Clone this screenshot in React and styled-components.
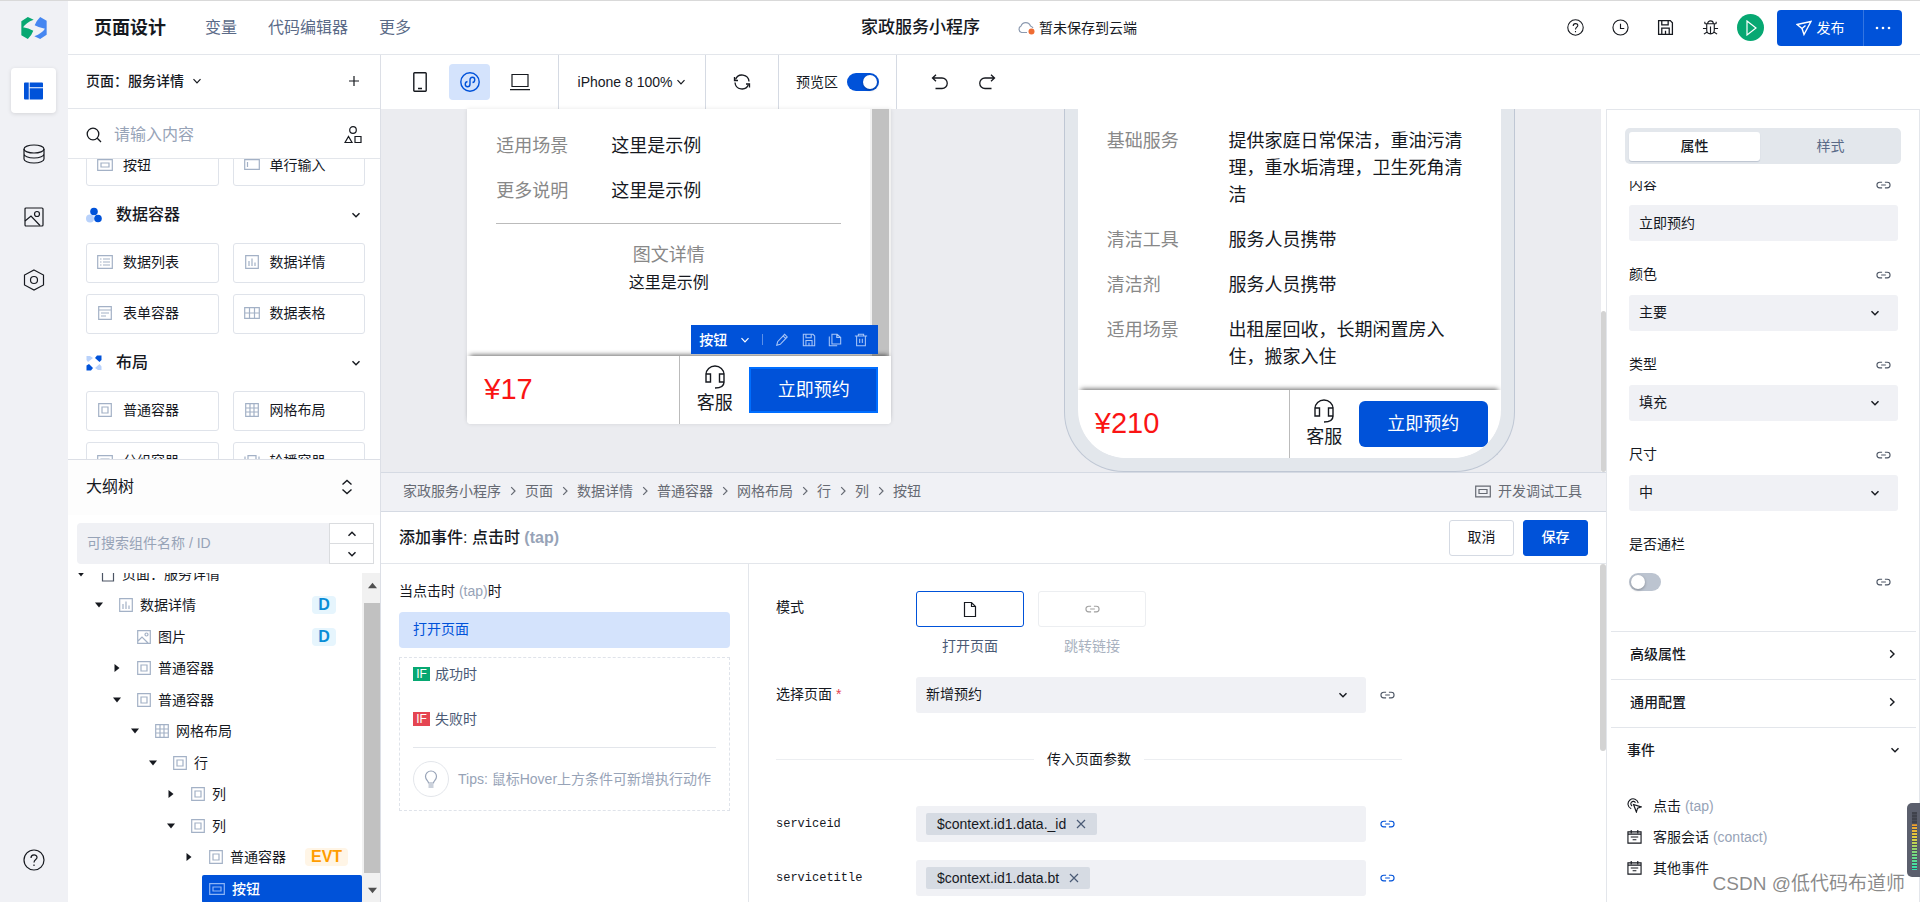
import React, { useLayoutEffect, useRef, useState } from "react";
import styled, { createGlobalStyle, css } from "styled-components";

const BLUE = "#0052d9";
const LINE = "#e3e6eb";
const MUTED = "#97a3b7";

/* ---------- icons ---------- */

const shapes = {
    logo: {
        box: "0 0 76 64",
        body: (
            <>
                <path fill="#07a872" d="M1 12 20 0 37 8Q14 17 6 30 22 32 36 40 32 52 20 64L1 53Z" />
                <path fill="#4687f1" d="M75 52 56 64 39 56Q62 47 70 34 54 32 40 24 44 12 56 0L75 11Z" />
            </>
        ),
    },
    board: {
        box: "0 0 20 18",
        body: (
            <g fill={BLUE} stroke="none">
                <path d="M1 0h4v18H1a1 1 0 0 1-1-1V1a1 1 0 0 1 1-1zM6 0h13a1 1 0 0 1 1 1v4H6zM6 6h14v11a1 1 0 0 1-1 1H6z" />
            </g>
        ),
    },
    database: {
        box: "0 0 22 20",
        body: (
            <>
                <ellipse cx="11" cy="5" rx="10" ry="4" />
                <path d="M1 5v10c0 2 4 4 10 4s10-2 10-4V5M1 10c0 2 4 4 10 4s10-2 10-4" />
            </>
        ),
    },
    image: {
        box: "0 0 20 20",
        body: (
            <>
                <rect x="1" y="1" width="18" height="18" rx="1" />
                <circle cx="13" cy="7" r="2.5" />
                <path d="m1 14 6-5 9 9.500" />
            </>
        ),
    },
    hexagon: {
        box: "0 0 22 22",
        body: (
            <>
                <path d="m11 1 9.500 5v10L11 21l-9.500-5V6z" />
                <circle cx="11" cy="11" r="3.500" />
            </>
        ),
    },
    help: {
        box: "0 0 22 22",
        body: (
            <>
                <circle cx="11" cy="11" r="10" />
                <path d="M8 9c0-4 6-4 6-.5 0 2-3 2.200-3 5M11 15.500v1.500" />
            </>
        ),
    },
    clock: {
        box: "0 0 18 18",
        body: (
            <>
                <circle cx="9" cy="9" r="8" />
                <path d="M9 5v5h4" />
            </>
        ),
    },
    save: {
        box: "0 0 16 16",
        body: <path d="M1.500 1.500h11l2 2v11h-13zM4.500 1.500v4h6v-4M4.500 14.500v-6h7v6M8 11v3" />,
    },
    bug: {
        box: "0 0 18 18",
        body: <path d="M6 5a3 3 0 0 1 6 0M3 5h12M5 5v7c0 5 8 5 8 0V5M9 8v8M1 10h4M13 10h4M2 16l3-2M16 16l-3-2M3 5V3M15 5V3" />,
    },
    play: { box: "0 0 16 16", body: <path d="m4 1 9 7-9 7z" /> },
    send: { box: "0 0 16 16", body: <path d="M1 4.500 15 1.500 8 14.500 6 8.500zM6 8.500l3.500-3" /> },
    dots: {
        box: "0 0 16 16",
        body: (
            <g fill="currentColor" stroke="none">
                <circle cx="2" cy="8" r="1.300" />
                <circle cx="8" cy="8" r="1.300" />
                <circle cx="14" cy="8" r="1.300" />
            </g>
        ),
    },
    cloud: {
        box: "0 0 18 14",
        body: (
            <>
                <path stroke="#8c9ab0" d="M10 11.500H4.500a3.500 3.500 0 0 1-.5-6.500 5 5 0 0 1 9.500 0c1 .3 2 1 2.500 2" />
                <circle cx="14.500" cy="10.500" r="3" fill="#ef6c33" stroke="none" />
            </>
        ),
    },
    chevron: { box: "0 0 10 10", body: <path d="m1.500 3.200 3.500 3.600 3.500-3.600" /> },
    chevronUp: { box: "0 0 10 10", body: <path d="m1.500 6.800 3.500-3.600 3.500 3.600" /> },
    chevronRight: { box: "0 0 10 10", body: <path d="m3.200 1.200 3.800 3.800-3.800 3.800" /> },
    unfold: { box: "0 0 12 16", body: <path d="m1.500 5.500 4.500-4 4.500 4M1.500 10.500l4.500 4 4.500-4" /> },
    plus: { box: "0 0 12 12", body: <path d="M6 1v10M1 6h10" /> },
    close: { box: "0 0 10 10", body: <path d="m1 1 8 8M9 1 1 9" /> },
    search: {
        box: "0 0 16 16",
        body: (
            <>
                <circle cx="7" cy="7" r="5.800" />
                <path d="m11.300 11.300 3.700 3.700" />
            </>
        ),
    },
    kinds: {
        box: "0 0 18 18",
        body: (
            <>
                <circle cx="9" cy="4" r="3.300" />
                <path d="m1 16.500 3.500-6 3.500 6zM11 10.500h6v6h-6z" />
            </>
        ),
    },
    phone: {
        box: "0 0 14 20",
        body: <path d="M1.500.8h11a.7.7 0 0 1 .7.7v17a.7.7 0 0 1-.7.7h-11a.7.7 0 0 1-.7-.7v-17a.7.7 0 0 1 .7-.7zM5 16.500h4" />,
    },
    mini: {
        box: "0 0 20 20",
        body: (
            <>
                <circle cx="10" cy="10" r="9.200" />
                <path d="M7.500 9.500C4.500 10 4.500 14.800 7.500 14.800c1.600 0 2.500-1 2.500-2.800V8c0-1.800.9-2.800 2.500-2.800 3 0 3 4.800 0 5.300" />
            </>
        ),
    },
    laptop: { box: "0 0 20 18", body: <path d="M2 1.500h16v12H2zM0 16.700h20" /> },
    refresh: {
        box: "0 0 18 18",
        body: (
            <>
                <path d="M2.500 6.500A7 7 0 0 1 16 8.500M15.500 11.500A7 7 0 0 1 2 9.500" />
                <path d="M1.500 4v3.500H5M16.500 14.500V11H13" />
            </>
        ),
    },
    undo: { box: "0 0 18 16", body: <path d="M5 .8 1.500 4 5 7.200M1.500 4H11a5 5 0 0 1 0 10.500H4.500" /> },
    redo: { box: "0 0 18 16", body: <path d="m13 .8 3.500 3.200L13 7.200M16.500 4H7a5 5 0 0 0 0 10.500h6.500" /> },
    link: {
        box: "0 0 16 10",
        body: <path d="M6.500 2H4a3 3 0 0 0 0 6h2.500M9.500 2H12a3 3 0 0 1 0 6H9.500M5.500 5h5" />,
    },
    file: { box: "0 0 14 16", body: <path d="M1.500 1h7l4 4v10h-11zM8.500 1v4h4" /> },
    button: { box: "0 0 16 12", body: <path d="M.7.7h14.600v10.600H.7zM4 4h8v4H4z" /> },
    input: { box: "0 0 16 12", body: <path d="M.7.7h14.600v9.600H.7zM3.500 3v5" /> },
    list: { box: "0 0 16 14", body: <path d="M.7.7h14.600v12.600H.7zM3 4h1.500M3 7h1.500M3 10h1.500M6 4h7M6 7h7M6 10h7" /> },
    chart: { box: "0 0 14 14", body: <path d="M.7.7h12.600v12.600H.7zM4 6v5M7 3.500V11M10 7.500V11" /> },
    form: { box: "0 0 14 14", body: <path d="M.7.7h12.600v12.600H.7zM.7 4h12.600M3 7h8M3 10h5" /> },
    table: { box: "0 0 16 12", body: <path d="M.7.7h14.600v10.600H.7zM.7 6h14.600M5.500.7v10.600M10.500.7v10.600" /> },
    box: { box: "0 0 14 14", body: <path d="M.7.7h12.600v12.600H.7zM4 4h6v6H4z" /> },
    grid: { box: "0 0 14 14", body: <path d="M.7.7h12.600v12.600H.7zM.7 5h12.600M.7 9h12.600M5 .7v12.600M9 .7v12.600" /> },
    carousel: { box: "0 0 16 12", body: <path d="M4 .7h8v10.600H4zM1 1.500v9M15 1.500v9" /> },
    picture: {
        box: "0 0 14 14",
        body: (
            <>
                <path d="M.7.7h12.600v12.600H.7zM1 11l4-4 6 6" />
                <circle cx="9.500" cy="4.500" r="1.500" />
            </>
        ),
    },
    circles: {
        box: "0 0 16 16",
        body: (
            <g stroke="none">
                <circle cx="4" cy="11.500" r="4" fill="#b9d2fb" />
                <circle cx="8" cy="4.500" r="3.800" fill={BLUE} />
                <circle cx="12" cy="11.500" r="3.800" fill={BLUE} />
            </g>
        ),
    },
    fans: {
        box: "0 0 16 16",
        body: (
            <g stroke="none">
                <path fill="#b9d2fb" d="M.5 1h3.500l3 2L2 7 .5 5zM15.500 15H12l-3-2 4.500-4 2 2.500z" />
                <path fill={BLUE} d="M15.500.5H11L9 3l4.500 4 2-2zM.5 15.500H5L7 13 3 9 .5 10.500z" />
            </g>
        ),
    },
    headset: {
        box: "0 0 20 24",
        body: <path d="M1 9.500a9 8.500 0 0 1 18 0M1 9h4.500v8H1zM14.500 9H19v8h-4.500zM19 17c0 4-3.500 6-9 6" />,
    },
    pencil: { box: "0 0 16 16", body: <path d="m2 14 1-4 8-8.500 3 3L6 13zM9.500 3.500l3 3" /> },
    copy: { box: "0 0 16 16", body: <path d="M4.500 1.500h6l4 3.500v7.500h-10zM10 1.500V5h4M1.500 4v10.500h9" /> },
    trash: { box: "0 0 16 16", body: <path d="M1 3.500h14M5 3.500v-2h6v2M3 3.500v11h10v-11M6.500 6.500v5M9.500 6.500v5" /> },
    bulb: {
        box: "0 0 14 18",
        body: <path d="M4.500 13c0-2-3-3-3-6.500a5.500 5.500 0 0 1 11 0c0 3.500-3 4.500-3 6.500zM4.500 15h5M4.500 17h5" />,
    },
    tap: {
        box: "0 0 16 16",
        body: <path d="M4.500 11.500A5.500 5.500 0 1 1 12 5.500M5.500 8.500A2.600 2.600 0 1 1 9 5M7 7l8 2.500-3.700 1.300L10 15z" />,
    },
    calendar: { box: "0 0 16 16", body: <path d="M1 3h14v12H1zM4.500 1v3.500M11.500 1v3.500M4 8.500h8M6 11.500h4M1 5.500h14" /> },
    caret: { box: "0 0 8 8", body: <path fill="currentColor" stroke="none" d="M0 1.500h8l-4 5z" /> },
    caretRight: { box: "0 0 8 8", body: <path fill="currentColor" stroke="none" d="M1.500 0v8l5-4z" /> },
    caretUp: { box: "0 0 8 8", body: <path fill="currentColor" stroke="none" d="M0 6.500h8l-4-5z" /> },
};

const Svg = styled.svg`
    display: block;
    flex: none;
    fill: none;
    stroke: currentColor;
    stroke-width: ${(p) => p.$weight};
    color: ${(p) => p.$color};
`;

const Icon = ({ name, w = 16, h = w, color = "inherit", weight = 1.2 }) => (
    <Svg viewBox={shapes[name].box} width={w} height={h} $color={color} $weight={weight} aria-hidden="true">
        {name === "logo" ? <g stroke="none">{shapes[name].body}</g> : shapes[name].body}
    </Svg>
);

/* ---------- data ---------- */

const railItems = [
    { name: "database", label: "数据源", w: 22, h: 20 },
    { name: "image", label: "素材", w: 20, h: 20 },
    { name: "hexagon", label: "设置", w: 22, h: 22 },
];

const palette = [
    { items: [["button", "按钮"], ["input", "单行输入"]] },
    {
        title: "数据容器",
        icon: "circles",
        items: [["list", "数据列表"], ["chart", "数据详情"], ["form", "表单容器"], ["table", "数据表格"]],
    },
    {
        title: "布局",
        icon: "fans",
        items: [["box", "普通容器"], ["grid", "网格布局"], ["button", "分组容器"], ["carousel", "轮播容器"]],
    },
];

const tree = [
    { level: 0, icon: "file", label: "页面：服务详情", open: true },
    { level: 1, icon: "chart", label: "数据详情", open: true, badge: "D" },
    { level: 2, icon: "picture", label: "图片", badge: "D" },
    { level: 2, icon: "box", label: "普通容器", open: false },
    { level: 2, icon: "box", label: "普通容器", open: true },
    { level: 3, icon: "grid", label: "网格布局", open: true },
    { level: 4, icon: "box", label: "行", open: true },
    { level: 5, icon: "box", label: "列", open: false },
    { level: 5, icon: "box", label: "列", open: true },
    { level: 6, icon: "box", label: "普通容器", open: false, badge: "EVT" },
    { level: 6, icon: "button", label: "按钮", selected: true },
];

const crumbs = ["家政服务小程序", "页面", "数据详情", "普通容器", "网格布局", "行", "列", "按钮"];

const previewRows = [
    ["基础服务", "提供家庭日常保洁，重油污清理，重水垢清理，卫生死角清洁"],
    ["清洁工具", "服务人员携带"],
    ["清洁剂", "服务人员携带"],
    ["适用场景", "出租屋回收，长期闲置房入住，搬家入住"],
];

const selects = [
    ["颜色", "主要"],
    ["类型", "填充"],
    ["尺寸", "中"],
];

const events = [
    ["tap", "点击", "(tap)"],
    ["calendar", "客服会话", "(contact)"],
    ["calendar", "其他事件", ""],
];

/* ---------- shared parts ---------- */

const ScrollPane = ({ as: Pane, start = 0, children }) => {
    const ref = useRef(null);
    useLayoutEffect(() => {
        ref.current.scrollTop = start;
    }, [start]);
    return <Pane ref={ref}>{children}</Pane>;
};

const SelectField = ({ id, value }) => (
    <SelectWrap>
        <select id={id} defaultValue={value}>
            <option>{value}</option>
        </select>
        <Icon name="chevron" w={10} weight={1.4} />
    </SelectWrap>
);

const PhoneFooter = ({ price, selected }) => (
    <Footer>
        <Price>{price}</Price>
        <Service>
            <Icon name="headset" w={20} h={24} weight={1.4} />
            客服
        </Service>
        <Book>
            <BookButton type="button" $selected={selected}>立即预约</BookButton>
            {selected && (
                <Floater>
                    <b>按钮</b>
                    <Icon name="chevron" w={10} />
                    <i />
                    <FloaterButton type="button" aria-label="编辑"><Icon name="pencil" w={14} /></FloaterButton>
                    <FloaterButton type="button" aria-label="保存"><Icon name="save" w={14} /></FloaterButton>
                    <FloaterButton type="button" aria-label="复制"><Icon name="copy" w={14} /></FloaterButton>
                    <FloaterButton type="button" aria-label="删除"><Icon name="trash" w={14} /></FloaterButton>
                </Floater>
            )}
        </Book>
    </Footer>
);

/* ---------- page ---------- */

const App = () => {
    const [preview, setPreview] = useState(true);
    const [full, setFull] = useState(false);

    return (
        <>
            <Global />
            <Page>
                <Rail>
                    <Icon name="logo" w={26} h={22} />
                    <RailNav>
                        <RailButton type="button" aria-label="页面" $active><Icon name="board" w={19} h={18} /></RailButton>
                        {railItems.map((item) => (
                            <RailButton type="button" key={item.name} aria-label={item.label}>
                                <Icon name={item.name} w={item.w} h={item.h} />
                            </RailButton>
                        ))}
                    </RailNav>
                    <RailButton type="button" aria-label="帮助"><Icon name="help" w={22} /></RailButton>
                </Rail>

                <Main>
                    <Header>
                        <HeaderNav>
                            <h1>页面设计</h1>
                            <a href="#vars">变量</a>
                            <a href="#code">代码编辑器</a>
                            <a href="#more">更多</a>
                        </HeaderNav>
                        <HeaderTitle>
                            <strong>家政服务小程序</strong>
                            <span><Icon name="cloud" w={18} h={14} />暂未保存到云端</span>
                        </HeaderTitle>
                        <HeaderTools>
                            <IconButton type="button" aria-label="帮助"><Icon name="help" w={17} weight={1.4} /></IconButton>
                            <IconButton type="button" aria-label="历史"><Icon name="clock" w={17} /></IconButton>
                            <IconButton type="button" aria-label="保存"><Icon name="save" w={17} /></IconButton>
                            <IconButton type="button" aria-label="调试"><Icon name="bug" w={17} /></IconButton>
                            <PlayButton type="button" aria-label="预览"><Icon name="play" w={16} /></PlayButton>
                            <Publish>
                                <button type="button"><Icon name="send" w={16} weight={1.4} />发布</button>
                                <button type="button" aria-label="更多操作"><Icon name="dots" w={16} /></button>
                            </Publish>
                        </HeaderTools>
                    </Header>

                    <Work>
                        <Side>
                            <SideHead>
                                <b>页面：服务详情</b>
                                <Icon name="chevron" w={10} />
                                <PlainButton type="button" aria-label="新建"><Icon name="plus" w={12} /></PlainButton>
                            </SideHead>
                            <SideSearch>
                                <Icon name="search" w={16} weight={1.3} />
                                <input aria-label="搜索组件" placeholder="请输入内容" />
                                <Icon name="kinds" w={18} />
                            </SideSearch>
                            <ScrollPane as={Palette} start={13}>
                                {palette.map((group) => (
                                    <section key={group.items[0][1]}>
                                        {group.title && (
                                            <GroupTitle>
                                                <Icon name={group.icon} w={16} />
                                                <h2>{group.title}</h2>
                                                <Icon name="chevron" w={10} weight={1.4} />
                                            </GroupTitle>
                                        )}
                                        <Cards>
                                            {group.items.map(([icon, label]) => (
                                                <Card type="button" key={label}>
                                                    <IconSlot><TreeIcon name={icon} /></IconSlot>
                                                    {label}
                                                </Card>
                                            ))}
                                        </Cards>
                                    </section>
                                ))}
                            </ScrollPane>
                            <OutlineHead>
                                大纲树
                                <Icon name="unfold" w={12} h={16} weight={1.4} />
                            </OutlineHead>
                            <OutlineSearch>
                                <input aria-label="搜索大纲" placeholder="可搜索组件名称 / ID" />
                                <div>
                                    <button type="button" aria-label="上一个"><Icon name="chevronUp" w={10} weight={1.4} /></button>
                                    <button type="button" aria-label="下一个"><Icon name="chevron" w={10} weight={1.4} /></button>
                                </div>
                            </OutlineSearch>
                            <Outline>
                                <ScrollPane as={TreeList} start={15}>
                                    {tree.map((node, i) => (
                                        <TreeRow key={i} $level={node.level}>
                                            <CaretSlot>
                                                {node.open !== undefined && (
                                                    <Icon name={node.open ? "caret" : "caretRight"} w={8} />
                                                )}
                                            </CaretSlot>
                                            <TreeLabel $selected={node.selected}>
                                                <TreeIcon
                                                    name={node.icon}
                                                    color={node.selected ? "#8db4f5" : node.level === 0 ? "#4c5564" : undefined}
                                                />
                                                {node.label}
                                            </TreeLabel>
                                            {node.badge && (
                                                <BadgeSlot><Badge $event={node.badge === "EVT"}>{node.badge}</Badge></BadgeSlot>
                                            )}
                                        </TreeRow>
                                    ))}
                                </ScrollPane>
                                <TreeScroll>
                                    <Icon name="caretUp" w={9} color="#505050" />
                                    <span />
                                    <Icon name="caret" w={9} color="#505050" />
                                </TreeScroll>
                            </Outline>
                        </Side>

                        <Stage>
                            <Toolbar>
                                <ToolGroup>
                                    <DeviceButton type="button" aria-label="手机"><Icon name="phone" w={14} h={20} weight={1.4} /></DeviceButton>
                                    <DeviceButton type="button" aria-label="小程序" $active><Icon name="mini" w={20} weight={1.4} /></DeviceButton>
                                    <DeviceButton type="button" aria-label="电脑"><Icon name="laptop" w={20} h={18} /></DeviceButton>
                                </ToolGroup>
                                <ToolGroup $size={147}>
                                    <PlainButton type="button">iPhone 8 100%<Icon name="chevron" w={10} /></PlainButton>
                                </ToolGroup>
                                <ToolGroup $size={73}>
                                    <PlainButton type="button" aria-label="刷新"><Icon name="refresh" w={18} weight={1.3} /></PlainButton>
                                </ToolGroup>
                                <ToolGroup $size={118}>
                                    <label htmlFor="preview">预览区</label>
                                    <Switch id="preview" type="checkbox" checked={preview} onChange={(e) => setPreview(e.target.checked)} />
                                </ToolGroup>
                                <History>
                                    <PlainButton type="button" aria-label="撤销"><Icon name="undo" w={18} h={16} weight={1.3} /></PlainButton>
                                    <PlainButton type="button" aria-label="重做"><Icon name="redo" w={18} h={16} weight={1.3} /></PlainButton>
                                </History>
                            </Toolbar>

                            <Content>
                                <Center>
                                    <Canvas>
                                        <Designs>
                                            <EditPhone>
                                                <EditScreen>
                                                    <PhoneBody $top={24}>
                                                        <dl>
                                                            <dt>适用场景</dt><dd>这里是示例</dd>
                                                            <dt>更多说明</dt><dd>这里是示例</dd>
                                                        </dl>
                                                        <hr />
                                                        <Rich>
                                                            <h3>图文详情</h3>
                                                            <p>这里是示例</p>
                                                        </Rich>
                                                    </PhoneBody>
                                                    <PhoneScroll />
                                                </EditScreen>
                                                <PhoneFooter price="¥17" selected />
                                            </EditPhone>
                                            <PreviewPhone>
                                                <PreviewScreen>
                                                    <PhoneBody $top={19}>
                                                        <dl>
                                                            {previewRows.map(([name, text]) => (
                                                                <React.Fragment key={name}><dt>{name}</dt><dd>{text}</dd></React.Fragment>
                                                            ))}
                                                        </dl>
                                                    </PhoneBody>
                                                    <PhoneFooter price="¥210" />
                                                </PreviewScreen>
                                            </PreviewPhone>
                                        </Designs>
                                        <CanvasScroll><span /></CanvasScroll>
                                    </Canvas>

                                    <Crumbs aria-label="组件路径">
                                        {crumbs.map((crumb, i) => (
                                            <React.Fragment key={crumb}>
                                                {i > 0 && <Icon name="chevronRight" w={10} />}
                                                <a href="#node">{crumb}</a>
                                            </React.Fragment>
                                        ))}
                                        <DevTools type="button"><Icon name="button" w={16} h={13} />开发调试工具</DevTools>
                                    </Crumbs>

                                    <EventHead>
                                        <h2>添加事件: 点击时 <Hint $bold>(tap)</Hint></h2>
                                        <ActionButton type="button">取消</ActionButton>
                                        <ActionButton type="button" $primary>保存</ActionButton>
                                    </EventHead>

                                    <EventBody>
                                        <Flow>
                                            <p>当点击时 <Hint>(tap)</Hint>时</p>
                                            <FlowAction type="button">打开页面</FlowAction>
                                            <FlowBranches>
                                                <Branch><Tag $color="#07a872">IF</Tag>成功时</Branch>
                                                <Branch><Tag $color="#e54552">IF</Tag>失败时</Branch>
                                                <Tips>
                                                    <span><Icon name="bulb" w={14} h={18} /></span>
                                                    Tips: 鼠标Hover上方条件可新增执行动作
                                                </Tips>
                                            </FlowBranches>
                                        </Flow>
                                        <Form>
                                            <ModeRow>
                                                <span>模式</span>
                                                <Mode type="button" $active><span><Icon name="file" w={14} h={17} /></span>打开页面</Mode>
                                                <Mode type="button"><span><Icon name="link" w={15} h={10} /></span>跳转链接</Mode>
                                            </ModeRow>
                                            <FormRow>
                                                <label htmlFor="page">选择页面 <em>*</em></label>
                                                <SelectField id="page" value="新增预约" />
                                                <Icon name="link" w={15} h={10} color="#4c5564" />
                                            </FormRow>
                                            <Divider>传入页面参数</Divider>
                                            {[["serviceid", "$context.id1.data._id"], ["servicetitle", "$context.id1.data.bt"]].map(([name, value]) => (
                                                <FormRow key={name}>
                                                    <code>{name}</code>
                                                    <ChipBox>
                                                        <Chip>
                                                            {value}
                                                            <PlainButton type="button" aria-label="移除"><Icon name="close" w={10} color="#4a5a75" /></PlainButton>
                                                        </Chip>
                                                    </ChipBox>
                                                    <Icon name="link" w={15} h={10} color={BLUE} />
                                                </FormRow>
                                            ))}
                                        </Form>
                                        <BodyScroll />
                                    </EventBody>
                                </Center>

                                <Props>
                                    <Tabs>
                                        <Tab type="button" $active>属性</Tab>
                                        <Tab type="button">样式</Tab>
                                    </Tabs>
                                    <ScrollPane as={PropList} start={10}>
                                        <Field>
                                            <label htmlFor="content">内容</label>
                                            <Icon name="link" w={15} h={10} />
                                            <input id="content" defaultValue="立即预约" />
                                        </Field>
                                        {selects.map(([label, value]) => (
                                            <Field key={label}>
                                                <label htmlFor={label}>{label}</label>
                                                <Icon name="link" w={15} h={10} />
                                                <SelectField id={label} value={value} />
                                            </Field>
                                        ))}
                                        <SwitchField>
                                            <label htmlFor="full">是否通栏</label>
                                            <Switch id="full" type="checkbox" checked={full} onChange={(e) => setFull(e.target.checked)} />
                                            <Icon name="link" w={15} h={10} />
                                        </SwitchField>
                                        <Fold type="button">高级属性<Icon name="chevronRight" w={10} weight={1.4} /></Fold>
                                        <Fold type="button">通用配置<Icon name="chevronRight" w={10} weight={1.4} /></Fold>
                                        <Fold type="button" $wide>事件<Icon name="chevron" w={10} weight={1.4} /></Fold>
                                        <Events>
                                            {events.map(([icon, label, hint]) => (
                                                <li key={label}><Icon name={icon} w={15} /><span>{label} <Hint>{hint}</Hint></span></li>
                                            ))}
                                        </Events>
                                    </ScrollPane>
                                </Props>
                            </Content>
                        </Stage>
                    </Work>
                </Main>
                <Meter><span /></Meter>
                <Watermark>CSDN @低代码布道师</Watermark>
            </Page>
        </>
    );
};

const TreeIcon = ({ name, color = "#a3b1c6" }) => {
    const [, , w, h] = shapes[name].box.split(" ").map(Number);
    return <Icon name={name} w={w} h={h} color={color} />;
};

/* ---------- styles ---------- */

const Global = createGlobalStyle`
    * {
        box-sizing: border-box;
    }
    body {
        margin: 0;
        color: #16191f;
        background: #fff;
        font: 14px/20px "Liberation Sans", "Noto Sans CJK SC", sans-serif;
    }
    button, input, select {
        font: inherit;
        color: inherit;
        border: 0;
        margin: 0;
        padding: 0;
        background: none;
        outline: none;
    }
    h1, h2, h3, p, dl, dd, ul {
        margin: 0;
        padding: 0;
        font-weight: normal;
        list-style: none;
    }
    a {
        color: inherit;
        text-decoration: none;
    }
    b, strong {
        font-weight: 500;
    }
`;

const Page = styled.div`
    position: relative;
    display: flex;
    height: 100vh;
    overflow: hidden;
    border-top: 1px solid #d9d9d9;
`;

const PlainButton = styled.button`
    display: flex;
    align-items: center;
    gap: 4px;
`;

const Hint = styled.span`
    color: ${MUTED};
    font-weight: ${(p) => (p.$bold ? "bold" : "normal")};
`;

const Rail = styled.nav`
    flex: none;
    width: 68px;
    padding: 16px 1px 20px 0;
    display: flex;
    flex-direction: column;
    align-items: center;
    justify-content: space-between;
    background: #f0f1f5;
`;
const RailNav = styled.div`
    flex: 1;
    margin-top: 29px;
    display: flex;
    flex-direction: column;
    gap: 18px;
`;
const RailButton = styled.button`
    width: 45px;
    height: 45px;
    display: grid;
    place-items: center;
    border-radius: 4px;
    ${(p) => p.$active && css`
        background: #fff;
        box-shadow: 0 1px 4px rgba(0, 0, 0, 0.12);
    `}
`;

const Main = styled.div`
    flex: 1;
    min-width: 0;
    display: flex;
    flex-direction: column;
`;

const Header = styled.header`
    flex: none;
    height: 54px;
    padding: 0 16px 0 26px;
    display: grid;
    grid-template-columns: 1fr auto 1fr;
    align-items: center;
    border-bottom: 1px solid ${LINE};
`;
const HeaderNav = styled.nav`
    display: flex;
    align-items: center;
    gap: 31px;
    font-size: 16px;
    color: #5a6a87;
    h1 {
        margin-right: 8px;
        font-size: 18px;
        font-weight: bold;
        color: #16191f;
    }
`;
const HeaderTitle = styled.div`
    display: flex;
    align-items: center;
    gap: 37px;
    strong {
        font-size: 17px;
    }
    span {
        display: flex;
        align-items: center;
        gap: 4px;
    }
`;
const HeaderTools = styled.div`
    padding-right: 2px;
    display: flex;
    align-items: center;
    justify-content: flex-end;
`;
const IconButton = styled.button`
    width: 45px;
    height: 36px;
    display: grid;
    place-items: center;
`;
const PlayButton = styled.button`
    width: 27px;
    height: 27px;
    margin: 0 13px 0 4px;
    display: grid;
    place-items: center;
    border-radius: 50%;
    color: #fff;
    background: #07a872;
`;
const Publish = styled.div`
    display: flex;
    border-radius: 4px;
    color: #fff;
    background: ${BLUE};
    button {
        width: 86px;
        height: 36px;
        display: flex;
        align-items: center;
        justify-content: center;
        gap: 5px;
    }
    button + button {
        width: 39px;
        border-left: 1px solid #3375e1;
    }
`;

const Work = styled.div`
    flex: 1;
    min-height: 0;
    display: flex;
`;

const Side = styled.aside`
    flex: none;
    width: 313px;
    display: flex;
    flex-direction: column;
    border-right: 1px solid #dcdfe6;
`;
const SideHead = styled.div`
    flex: none;
    height: 54px;
    padding: 0 20px 2px 18px;
    display: flex;
    align-items: center;
    gap: 8px;
    border-bottom: 1px solid ${LINE};
    button {
        margin-left: auto;
    }
`;
const SideSearch = styled.div`
    flex: none;
    height: 50px;
    padding: 2px 18px 0;
    display: flex;
    align-items: center;
    gap: 12px;
    border-bottom: 1px solid ${LINE};
    input {
        flex: 1;
        min-width: 0;
        font-size: 16px;
    }
    input::placeholder {
        color: ${MUTED};
    }
`;
const scrollable = css`
    overflow-y: auto;
    scrollbar-width: none;
`;
const Palette = styled.div`
    flex: none;
    height: 300px;
    padding: 0 15px 0 18px;
    ${scrollable}
`;
const GroupTitle = styled.div`
    height: 57px;
    padding: 0 4px 0 0;
    display: flex;
    align-items: center;
    gap: 14px;
    h2 {
        flex: 1;
        font-size: 16px;
        font-weight: 500;
    }
`;
const Cards = styled.div`
    display: grid;
    grid-template-columns: 1fr 1fr;
    gap: 11px 14px;
`;
const Card = styled.button`
    height: 40px;
    padding: 0 10px 2px;
    display: flex;
    align-items: center;
    gap: 10px;
    border: 1px solid #dfe3ea;
    border-radius: 3px;
`;
const IconSlot = styled.span`
    width: 16px;
    display: grid;
    place-items: center;
`;
const OutlineHead = styled.div`
    flex: none;
    height: 56px;
    padding: 0 27px 2px 18px;
    display: flex;
    align-items: center;
    justify-content: space-between;
    font-size: 16px;
    border-top: 1px solid #dcdfe6;
    background: #fdfdfd;
`;
const OutlineSearch = styled.div`
    flex: none;
    padding: 8px 6px 9px 9px;
    display: flex;
    input {
        flex: 1;
        min-width: 0;
        height: 41px;
        padding: 0 10px 2px;
        border-radius: 4px 0 0 4px;
        background: #f0f1f5;
    }
    input::placeholder {
        color: ${MUTED};
    }
    div {
        width: 45px;
        display: flex;
        flex-direction: column;
        border: 1px solid #dadcdf;
    }
    button {
        flex: 1;
        display: grid;
        place-items: center;
    }
    button + button {
        border-top: 1px solid #dadcdf;
    }
`;
const Outline = styled.div`
    flex: 1;
    min-height: 0;
    display: flex;
`;
const TreeList = styled.ul`
    flex: 1;
    min-height: 0;
    ${scrollable}
`;
const TreeRow = styled.li`
    height: 31px;
    padding-left: ${(p) => 9 + p.$level * 18}px;
    display: flex;
    align-items: center;
    &:nth-child(even) {
        height: 32px;
    }
`;
const CaretSlot = styled.span`
    flex: none;
    width: 17px;
`;
const TreeLabel = styled.span`
    height: 28px;
    padding: 0 7px;
    display: flex;
    align-items: center;
    gap: 7px;
    ${(p) => p.$selected && css`
        flex: 1;
        color: #fff;
        font-weight: 500;
        border-radius: 2px;
        background: ${BLUE};
    `}
`;
const BadgeSlot = styled.span`
    width: 38px;
    margin: 0 19px 0 auto;
    display: grid;
    place-items: center;
`;
const Badge = styled.span`
    padding: 0 6px;
    font-size: 16px;
    line-height: 18px;
    font-weight: bold;
    border-radius: 4px;
    color: ${(p) => (p.$event ? "#ff9d00" : "#0a8dd6")};
    background: ${(p) => (p.$event ? "#fff5e6" : "#e6f5fd")};
`;
const TreeScroll = styled.div`
    flex: none;
    width: 18px;
    padding: 8px 0 7px 2px;
    display: flex;
    flex-direction: column;
    align-items: center;
    gap: 13px;
    background: #f1f1f1;
    span {
        flex: 1;
        width: 16px;
        background: #c1c1c1;
    }
`;

const Stage = styled.div`
    flex: 1;
    min-width: 0;
    display: flex;
    flex-direction: column;
`;
const Toolbar = styled.div`
    flex: none;
    height: 54px;
    display: flex;
`;
const ToolGroup = styled.div`
    width: ${(p) => (p.$size ? p.$size + "px" : "auto")};
    padding: ${(p) => (p.$size ? 0 : "0 18px")};
    display: flex;
    align-items: center;
    justify-content: center;
    gap: 9px;
    border-right: 1px solid #d5dae3;
`;
const DeviceButton = styled.button`
    width: 41px;
    height: 36px;
    display: grid;
    place-items: center;
    border-radius: 4px;
    ${(p) => p.$active && css`
        color: ${BLUE};
        background: #d4e3fc;
    `}
`;
const History = styled.div`
    padding-left: 34px;
    display: flex;
    align-items: center;
    gap: 29px;
`;
const Switch = styled.input`
    appearance: none;
    width: 32px;
    height: 18px;
    padding: 2px;
    border-radius: 9px;
    background: ${(p) => (p.checked ? BLUE : "#bcc4d0")};
    &::before {
        content: "";
        display: block;
        width: 14px;
        height: 14px;
        margin-left: ${(p) => (p.checked ? "14px" : 0)};
        border-radius: 50%;
        background: #fff;
        box-shadow: 0 1px 3px rgba(0, 0, 0, 0.3);
    }
`;

const Content = styled.div`
    flex: 1;
    min-height: 0;
    display: flex;
`;
const Center = styled.main`
    flex: 1;
    min-width: 0;
    display: flex;
    flex-direction: column;
`;
const Canvas = styled.div`
    flex: none;
    height: 363px;
    display: flex;
    background: #ebecf0;
`;
const Designs = styled.div`
    flex: 1;
    min-width: 0;
    display: flex;
    align-items: flex-start;
    justify-content: space-around;
`;
const CanvasScroll = styled.div`
    width: 5px;
    display: flex;
    align-items: flex-end;
    background: #fff;
    span {
        width: 5px;
        height: 161px;
        border-radius: 3px;
        background: #d3d3d3;
    }
`;
const EditPhone = styled.div`
    width: 424px;
    border-radius: 0 0 4px 4px;
    background: #fff;
    box-shadow: 0 0 4px rgba(0, 0, 0, 0.1);
`;
const EditScreen = styled.div`
    height: 247px;
    display: flex;
`;
const PhoneScroll = styled.div`
    width: 21px;
    border: solid #f1f1f1;
    border-width: 0 2px;
    background: #c1c1c1;
`;
const PreviewPhone = styled.div`
    width: 451px;
    height: 363px;
    padding: 0 13px 13px;
    border: solid #bfc7d4;
    border-width: 0 1px 1px;
    border-radius: 0 0 60px 60px;
    background: #e3e7ec;
`;
const PreviewScreen = styled.div`
    height: 349px;
    display: flex;
    flex-direction: column;
    justify-content: space-between;
    overflow: hidden;
    border-radius: 0 0 48px 48px;
    background: #fff;
`;
const PhoneBody = styled.div`
    flex: 1;
    min-height: 0;
    padding: ${(p) => p.$top}px 29px 0;
    font-size: 18px;
    line-height: 27px;
    dl {
        display: grid;
        grid-template-columns: 1fr 2fr;
        row-gap: 18px;
    }
    dt, h3 {
        color: #888;
        font-size: 18px;
    }
    hr {
        margin: 18px 0;
        border: 0;
        border-top: 1px solid #bbb;
    }
`;
const Rich = styled.div`
    text-align: center;
    font-size: 16px;
`;
const Footer = styled.div`
    flex: none;
    position: relative;
    height: 68px;
    display: flex;
    border-radius: inherit;
    background: #fff;
    box-shadow: 0 -4px 5px -3px rgba(0, 0, 0, 0.6);
`;
const Price = styled.div`
    flex: 1;
    padding-left: 17px;
    font-size: 29px;
    line-height: 66px;
    color: #fa1414;
    border-right: 1px solid #bbb;
`;
const Service = styled.div`
    width: 69px;
    padding-top: 9px;
    display: flex;
    flex-direction: column;
    align-items: center;
    gap: 2px;
    font-size: 18px;
    line-height: 24px;
`;
const Book = styled.div`
    position: relative;
    width: 142px;
    padding: 11px 13px 0 0;
`;
const BookButton = styled.button`
    width: 129px;
    height: 46px;
    font-size: 18px;
    color: #fff;
    border: ${(p) => (p.$selected ? "2px solid #006eff" : 0)};
    border-radius: ${(p) => (p.$selected ? 0 : 6)}px;
    background: ${BLUE};
`;
const Floater = styled.div`
    position: absolute;
    right: 13px;
    bottom: 70px;
    width: 187px;
    height: 29px;
    padding: 0 10px 0 8px;
    display: flex;
    align-items: center;
    justify-content: space-between;
    color: #fff;
    background: ${BLUE};
    i {
        width: 1px;
        height: 11px;
        background: #5c90e8;
    }
`;
const FloaterButton = styled.button`
    color: #a9c6f7;
`;

const Crumbs = styled.nav`
    flex: none;
    height: 40px;
    padding: 0 24px 2px 22px;
    display: flex;
    align-items: center;
    gap: 7px;
    color: #666a73;
    border: solid #d5dae3;
    border-width: 1px 0;
    background: #f0f1f5;
`;
const DevTools = styled.button`
    margin-left: auto;
    display: flex;
    align-items: center;
    gap: 7px;
`;
const EventHead = styled.div`
    flex: none;
    height: 52px;
    padding: 0 18px;
    display: flex;
    align-items: center;
    gap: 9px;
    border-bottom: 1px solid ${LINE};
    h2 {
        flex: 1;
        font-size: 16px;
        font-weight: 500;
    }
`;
const ActionButton = styled.button`
    width: 65px;
    height: 36px;
    padding-bottom: 2px;
    font-weight: ${(p) => (p.$primary ? 500 : 400)};
    color: ${(p) => (p.$primary ? "#fff" : "inherit")};
    border: 1px solid ${(p) => (p.$primary ? BLUE : "#d5dae3")};
    border-radius: 3px;
    background: ${(p) => (p.$primary ? BLUE : "#fff")};
`;
const EventBody = styled.div`
    flex: 1;
    min-height: 0;
    display: flex;
    overflow: hidden;
`;
const Flow = styled.div`
    flex: none;
    width: 368px;
    padding: 17px 18px 0;
    border-right: 1px solid ${LINE};
`;
const FlowAction = styled.button`
    width: 100%;
    height: 36px;
    margin: 11px 0 9px;
    padding: 0 14px 2px;
    text-align: left;
    color: ${BLUE};
    border-radius: 4px;
    background: #d4e3fc;
`;
const FlowBranches = styled.div`
    padding: 6px 13px 13px;
    border: 1px dashed #dfe3ea;
`;
const Branch = styled.div`
    height: 20px;
    margin-bottom: 25px;
    display: flex;
    align-items: center;
    gap: 5px;
    color: #4a5a75;
`;
const Tag = styled.span`
    width: 17px;
    font-size: 12px;
    line-height: 14px;
    text-align: center;
    color: #fff;
    background: ${(p) => p.$color};
`;
const Tips = styled.div`
    margin-top: -7px;
    padding-top: 13px;
    display: flex;
    align-items: center;
    gap: 9px;
    white-space: nowrap;
    color: ${MUTED};
    border-top: 1px solid ${LINE};
    span {
        width: 36px;
        height: 36px;
        display: grid;
        place-items: center;
        border: 1px solid ${LINE};
        border-radius: 50%;
    }
`;
const Form = styled.div`
    flex: 1;
    padding: 27px 0 0 27px;
    color: #16191f;
`;
const FormRow = styled.div`
    max-width: 625px;
    height: 36px;
    margin-bottom: 18px;
    display: grid;
    grid-template-columns: 140px 1fr 35px;
    align-items: center;
    > svg {
        margin-left: 14px;
    }
    label {
        padding-bottom: 3px;
    }
    em {
        font-style: normal;
        color: #e54552;
    }
    code {
        font: 12px/20px "Liberation Mono", monospace;
    }
`;
const ModeRow = styled.div`
    height: 86px;
    display: flex;
    > span {
        width: 140px;
        padding-top: 6px;
    }
`;
const Mode = styled.button`
    width: 108px;
    margin-right: 14px;
    align-self: flex-start;
    color: ${(p) => (p.$active ? "#4a5a75" : "#a9b2c0")};
    span {
        height: 36px;
        margin-bottom: 9px;
        display: grid;
        place-items: center;
        color: ${(p) => (p.$active ? "#16191f" : "#a0a0a0")};
        border: 1px solid ${(p) => (p.$active ? BLUE : "#eceef1")};
        border-radius: 3px;
    }
`;
const Divider = styled.div`
    max-width: 626px;
    margin: 36px 0 37px;
    display: flex;
    align-items: center;
    gap: 13px;
    &::before, &::after {
        content: "";
        flex: 1;
        border-top: 1px solid #eceef1;
    }
`;
const ChipBox = styled.div`
    height: 36px;
    padding: 7px 10px;
    border-radius: 3px;
    background: #f0f1f5;
`;
const Chip = styled.span`
    height: 22px;
    padding: 0 11px;
    display: inline-flex;
    align-items: center;
    gap: 10px;
    border-radius: 2px;
    background: #d6dbe3;
`;
const BodyScroll = styled.div`
    width: 6px;
    height: 187px;
    border-radius: 3px;
    background: #d3d3d3;
`;

const SelectWrap = styled.div`
    display: grid;
    align-items: center;
    border-radius: 3px;
    background: #f0f1f5;
    > * {
        grid-area: 1 / 1;
    }
    select {
        width: 100%;
        height: 36px;
        padding: 0 10px 2px;
        appearance: none;
    }
    svg {
        justify-self: end;
        margin-right: 18px;
        pointer-events: none;
    }
`;

const Props = styled.aside`
    flex: none;
    width: 314px;
    display: flex;
    flex-direction: column;
    border: 1px solid ${LINE};
    border-bottom: 0;
`;
const Tabs = styled.div`
    flex: none;
    height: 36px;
    margin: 18px 18px 17px;
    padding: 4px 0 3px 4px;
    display: flex;
    border-radius: 5px;
    background: #e3e7ec;
`;
const Tab = styled.button`
    flex: 1;
    padding-bottom: 2px;
    color: #5a6a87;
    border-radius: 3px;
    ${(p) => p.$active && css`
        flex: none;
        width: 131px;
        color: #16191f;
        font-weight: 500;
        background: #fff;
        box-shadow: 0 1px 1px #bcc4d0;
    `}
`;
const PropList = styled.div`
    flex: 1;
    min-height: 0;
    padding: 4px 3px 48px 4px;
    ${scrollable}
`;
const Field = styled.div`
    padding: 0 18px 24px;
    display: grid;
    grid-template-columns: 1fr auto;
    align-items: center;
    row-gap: 10px;
    label {
        height: 20px;
        line-height: 18px;
    }
    > svg {
        margin-right: 7px;
        color: #4c5564;
    }
    > input, > div {
        grid-column: 1 / 3;
        height: 36px;
    }
    > input {
        padding: 0 10px 2px;
        border-radius: 3px;
        background: #f0f1f5;
    }
`;
const SwitchField = styled.div`
    padding: 0 18px 40px;
    display: grid;
    grid-template-columns: 1fr auto;
    align-items: center;
    row-gap: 18px;
    label {
        grid-column: 1 / 3;
        height: 20px;
        line-height: 18px;
    }
    svg {
        margin-right: 7px;
        color: #4c5564;
    }
`;
const Fold = styled.button`
    width: 100%;
    height: 48px;
    padding: 0 ${(p) => (p.$wide ? 16 : 19)}px 3px;
    display: flex;
    align-items: center;
    justify-content: space-between;
    font-weight: 500;
    border-top: 1px solid ${LINE};
`;
const Events = styled.ul`
    padding: 15px 16px 0;
    li {
        height: 31px;
        display: flex;
        align-items: center;
        gap: 11px;
    }
`;

/* volume meter docked at the right edge */
const Meter = styled.div`
    position: absolute;
    right: 0;
    bottom: 25px;
    width: 13px;
    height: 74px;
    padding: 9px 3px 7px 5px;
    border-radius: 5px 0 0 5px;
    background: #5b5f6d;
    span {
        display: block;
        height: 100%;
        background:
            repeating-linear-gradient(transparent 0 2px, #4a4d59 2px 3px),
            linear-gradient(#3f424c 0 20%, #f0a030 22%, #e0d040 45%, #7dd87c 70%, #2fe0b0);
    }
`;
const Watermark = styled.div`
    position: absolute;
    right: 15px;
    bottom: 6px;
    font-size: 19px;
    line-height: 24px;
    color: rgba(100, 100, 100, 0.75);
    pointer-events: none;
`;

export default App;
